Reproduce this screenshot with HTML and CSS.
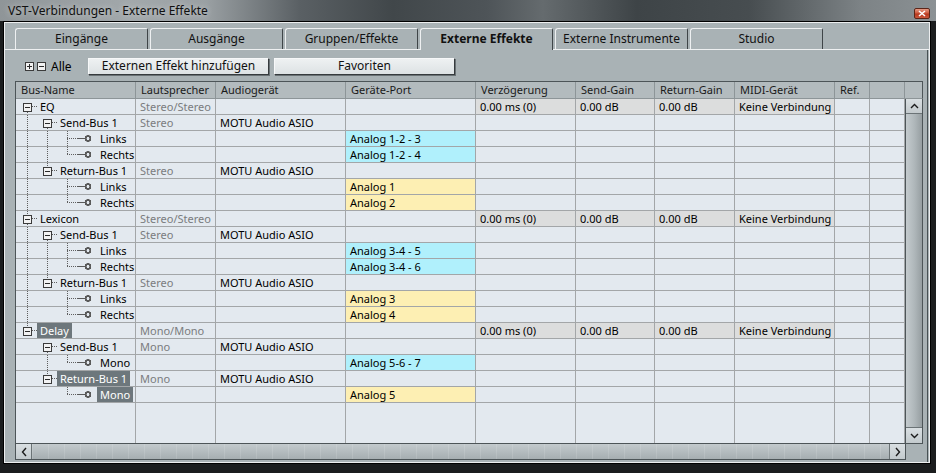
FILE: index.html
```html
<!DOCTYPE html>
<html lang="de">
<head>
    <meta charset="UTF-8">
    <meta name="viewport" content="width=device-width, initial-scale=1.0">
    <title>VST-Verbindungen - Externe Effekte</title>
    <link rel="stylesheet" href="styles.css">
</head>
<body>
<div class="window">
    <div class="titlebar">
        <span class="title">VST-Verbindungen - Externe Effekte</span>
        <span class="close"><svg width="8" height="7" viewBox="0 0 8 7"><path d="M1 1 L7 6 M7 1 L1 6" stroke="#fff" stroke-width="1.6"/></svg></span>
    </div>
    <div class="client">
        <div class="inner">
            <div class="tabs">
                <div class="tab">Eingänge</div>
                <div class="tab">Ausgänge</div>
                <div class="tab">Gruppen/Effekte</div>
                <div class="tab active">Externe Effekte</div>
                <div class="tab">Externe Instrumente</div>
                <div class="tab">Studio</div>
            </div>
            <div class="panel">
                <div class="toolbar">
                    <div class="expand">
                        <span class="bx plus"></span>
                        <span class="bx"></span>
                        <span class="alle">Alle</span>
                    </div>
                    <button class="btn">Externen Effekt hinzufügen</button>
                    <button class="btn">Favoriten</button>
                </div>

                <div class="tbl">
                    <div class="head">
                        <div class="hc">Bus-Name</div>
                        <div class="hc">Lautsprecher</div>
                        <div class="hc">Audiogerät</div>
                        <div class="hc">Geräte-Port</div>
                        <div class="hc">Verzögerung</div>
                        <div class="hc">Send-Gain</div>
                        <div class="hc">Return-Gain</div>
                        <div class="hc">MIDI-Gerät</div>
                        <div class="hc">Ref.</div>
                        <div class="hc"></div>
                        <div class="hc last"></div>
                    </div>
                    <div class="body">
                        <div class="rows">
                            <!-- EQ -->
                            <div class="row">
                                <div class="c tree"><span class="u n dn"><i class="bx"></i></span><span class="lbl">EQ</span></div>
                                <div class="c g">Stereo/Stereo</div><div class="c"></div><div class="c"></div>
                                <div class="c hl">0.00 ms (0)</div><div class="c hl">0.00 dB</div><div class="c hl">0.00 dB</div><div class="c hl">Keine Verbindung</div><div class="c"></div><div class="c"></div>
                            </div>
                            <div class="row">
                                <div class="c tree"><span class="u v"></span><span class="u n dn"><i class="bx"></i></span><span class="lbl">Send-Bus 1</span></div>
                                <div class="c g">Stereo</div><div class="c">MOTU Audio ASIO</div><div class="c"></div>
                                <div class="c"></div><div class="c"></div><div class="c"></div><div class="c"></div><div class="c"></div><div class="c"></div>
                            </div>
                            <div class="row">
                                <div class="c tree"><span class="u v"></span><span class="u v"></span><span class="u t"></span><span class="pin"></span><span class="lbl">Links</span></div>
                                <div class="c"></div><div class="c"></div><div class="c cy">Analog 1-2 - 3</div>
                                <div class="c"></div><div class="c"></div><div class="c"></div><div class="c"></div><div class="c"></div><div class="c"></div>
                            </div>
                            <div class="row">
                                <div class="c tree"><span class="u v"></span><span class="u v"></span><span class="u l"></span><span class="pin"></span><span class="lbl">Rechts</span></div>
                                <div class="c"></div><div class="c"></div><div class="c cy">Analog 1-2 - 4</div>
                                <div class="c"></div><div class="c"></div><div class="c"></div><div class="c"></div><div class="c"></div><div class="c"></div>
                            </div>
                            <div class="row">
                                <div class="c tree"><span class="u v"></span><span class="u n up"><i class="bx"></i></span><span class="lbl">Return-Bus 1</span></div>
                                <div class="c g">Stereo</div><div class="c">MOTU Audio ASIO</div><div class="c"></div>
                                <div class="c"></div><div class="c"></div><div class="c"></div><div class="c"></div><div class="c"></div><div class="c"></div>
                            </div>
                            <div class="row">
                                <div class="c tree"><span class="u v"></span><span class="u"></span><span class="u t"></span><span class="pin"></span><span class="lbl">Links</span></div>
                                <div class="c"></div><div class="c"></div><div class="c ye">Analog 1</div>
                                <div class="c"></div><div class="c"></div><div class="c"></div><div class="c"></div><div class="c"></div><div class="c"></div>
                            </div>
                            <div class="row">
                                <div class="c tree"><span class="u v"></span><span class="u"></span><span class="u l"></span><span class="pin"></span><span class="lbl">Rechts</span></div>
                                <div class="c"></div><div class="c"></div><div class="c ye">Analog 2</div>
                                <div class="c"></div><div class="c"></div><div class="c"></div><div class="c"></div><div class="c"></div><div class="c"></div>
                            </div>
                            <!-- Lexicon -->
                            <div class="row">
                                <div class="c tree"><span class="u n up dn"><i class="bx"></i></span><span class="lbl">Lexicon</span></div>
                                <div class="c g">Stereo/Stereo</div><div class="c"></div><div class="c"></div>
                                <div class="c hl">0.00 ms (0)</div><div class="c hl">0.00 dB</div><div class="c hl">0.00 dB</div><div class="c hl">Keine Verbindung</div><div class="c"></div><div class="c"></div>
                            </div>
                            <div class="row">
                                <div class="c tree"><span class="u v"></span><span class="u n dn"><i class="bx"></i></span><span class="lbl">Send-Bus 1</span></div>
                                <div class="c g">Stereo</div><div class="c">MOTU Audio ASIO</div><div class="c"></div>
                                <div class="c"></div><div class="c"></div><div class="c"></div><div class="c"></div><div class="c"></div><div class="c"></div>
                            </div>
                            <div class="row">
                                <div class="c tree"><span class="u v"></span><span class="u v"></span><span class="u t"></span><span class="pin"></span><span class="lbl">Links</span></div>
                                <div class="c"></div><div class="c"></div><div class="c cy">Analog 3-4 - 5</div>
                                <div class="c"></div><div class="c"></div><div class="c"></div><div class="c"></div><div class="c"></div><div class="c"></div>
                            </div>
                            <div class="row">
                                <div class="c tree"><span class="u v"></span><span class="u v"></span><span class="u l"></span><span class="pin"></span><span class="lbl">Rechts</span></div>
                                <div class="c"></div><div class="c"></div><div class="c cy">Analog 3-4 - 6</div>
                                <div class="c"></div><div class="c"></div><div class="c"></div><div class="c"></div><div class="c"></div><div class="c"></div>
                            </div>
                            <div class="row">
                                <div class="c tree"><span class="u v"></span><span class="u n up"><i class="bx"></i></span><span class="lbl">Return-Bus 1</span></div>
                                <div class="c g">Stereo</div><div class="c">MOTU Audio ASIO</div><div class="c"></div>
                                <div class="c"></div><div class="c"></div><div class="c"></div><div class="c"></div><div class="c"></div><div class="c"></div>
                            </div>
                            <div class="row">
                                <div class="c tree"><span class="u v"></span><span class="u"></span><span class="u t"></span><span class="pin"></span><span class="lbl">Links</span></div>
                                <div class="c"></div><div class="c"></div><div class="c ye">Analog 3</div>
                                <div class="c"></div><div class="c"></div><div class="c"></div><div class="c"></div><div class="c"></div><div class="c"></div>
                            </div>
                            <div class="row">
                                <div class="c tree"><span class="u v"></span><span class="u"></span><span class="u l"></span><span class="pin"></span><span class="lbl">Rechts</span></div>
                                <div class="c"></div><div class="c"></div><div class="c ye">Analog 4</div>
                                <div class="c"></div><div class="c"></div><div class="c"></div><div class="c"></div><div class="c"></div><div class="c"></div>
                            </div>
                            <!-- Delay -->
                            <div class="row">
                                <div class="c tree"><span class="u n up"><i class="bx"></i></span><span class="lbl sel">Delay</span></div>
                                <div class="c g">Mono/Mono</div><div class="c"></div><div class="c"></div>
                                <div class="c hl">0.00 ms (0)</div><div class="c hl">0.00 dB</div><div class="c hl">0.00 dB</div><div class="c hl">Keine Verbindung</div><div class="c"></div><div class="c"></div>
                            </div>
                            <div class="row">
                                <div class="c tree"><span class="u"></span><span class="u n dn"><i class="bx"></i></span><span class="lbl">Send-Bus 1</span></div>
                                <div class="c g">Mono</div><div class="c">MOTU Audio ASIO</div><div class="c"></div>
                                <div class="c"></div><div class="c"></div><div class="c"></div><div class="c"></div><div class="c"></div><div class="c"></div>
                            </div>
                            <div class="row">
                                <div class="c tree"><span class="u"></span><span class="u v"></span><span class="u l"></span><span class="pin"></span><span class="lbl">Mono</span></div>
                                <div class="c"></div><div class="c"></div><div class="c cy">Analog 5-6 - 7</div>
                                <div class="c"></div><div class="c"></div><div class="c"></div><div class="c"></div><div class="c"></div><div class="c"></div>
                            </div>
                            <div class="row">
                                <div class="c tree"><span class="u"></span><span class="u n up"><i class="bx"></i></span><span class="lbl sel">Return-Bus 1</span></div>
                                <div class="c g">Mono</div><div class="c">MOTU Audio ASIO</div><div class="c"></div>
                                <div class="c"></div><div class="c"></div><div class="c"></div><div class="c"></div><div class="c"></div><div class="c"></div>
                            </div>
                            <div class="row">
                                <div class="c tree"><span class="u"></span><span class="u"></span><span class="u l"></span><span class="pin"></span><span class="lbl sel">Mono</span></div>
                                <div class="c"></div><div class="c"></div><div class="c ye">Analog 5</div>
                                <div class="c"></div><div class="c"></div><div class="c"></div><div class="c"></div><div class="c"></div><div class="c"></div>
                            </div>
                            <div class="row filler">
                                <div class="c"></div><div class="c"></div><div class="c"></div><div class="c"></div><div class="c"></div>
                                <div class="c"></div><div class="c"></div><div class="c"></div><div class="c"></div><div class="c"></div>
                            </div>
                        </div>
                        <div class="vscroll">
                            <div class="sbtn top"><svg width="9" height="6" viewBox="0 0 9 6"><path d="M1 5 L4.5 1.5 L8 5" fill="none" stroke="#1c1c1c" stroke-width="1.4"/></svg></div>
                            <div class="track"></div>
                            <div class="sbtn bottom"><svg width="9" height="6" viewBox="0 0 9 6"><path d="M1 1 L4.5 4.5 L8 1" fill="none" stroke="#1c1c1c" stroke-width="1.4"/></svg></div>
                        </div>
                    </div>
                    <div class="foot">
                        <div class="hbar">
                            <div class="sbtn left"><svg width="6" height="10" viewBox="0 0 6 10"><path d="M5 1 L1.5 5 L5 9" fill="none" stroke="#1c1c1c" stroke-width="1.4"/></svg></div>
                            <div class="htrack"></div>
                            <div class="sbtn right"><svg width="6" height="10" viewBox="0 0 6 10"><path d="M1 1 L4.5 5 L1 9" fill="none" stroke="#1c1c1c" stroke-width="1.4"/></svg></div>
                        </div>
                        <div class="corner"></div>
                    </div>
                </div>
            </div>
        </div>
    </div>
</div>
</body>
</html>
```

FILE: styles.css
```css
* {
    box-sizing: border-box;
}
body {
    margin: 0;
    background: #1b1d1e;
    font-family: "Noto Sans", "Liberation Sans", sans-serif;
    font-size: 11px;
    color: #000;
    --dv: repeating-linear-gradient(to bottom, #5e5e5e 0 1px, transparent 1px 2px);
    --dh: repeating-linear-gradient(to right, #5e5e5e 0 1px, transparent 1px 2px);
    --grid: #a3a6a8;
    --edge: #4d5558;
}
.window {
    width: 936px;
    height: 473px;
    overflow: hidden;
}

/* title bar */
.titlebar {
    height: 21px;
    display: flex;
    justify-content: space-between;
    padding: 0 6px 0 8px;
    background: linear-gradient(to right, #8f9598 0%, #a2a8ab 14%, #9aa0a3 22%, #5a6064 32%, #41474a 42%, #4e5458 52%, #656b6e 58%, #3e4447 68%, #474d50 80%, #7d8386 92%, #8b9194 100%);
}
.title {
    line-height: 21px;
    font-size: 12px;
    color: #101010;
    text-shadow: 0 0 6px rgba(255, 255, 255, 0.6);
}
.close {
    align-self: flex-end;
    margin-bottom: 2px;
    width: 16px;
    height: 11px;
    display: flex;
    align-items: center;
    justify-content: center;
    border: 1px solid #5c2518;
    border-radius: 2px;
    background: linear-gradient(#e59a84, #cf5a3e 45%, #b6391f 55%, #c9553a);
}

/* window frame */
.client {
    margin-left: 3px;
    width: 928px;
    height: 443px;
    border: 1px solid #000;
}
.inner {
    height: 100%;
    border: 1px solid #eceeef;
    background: #a9b2b5;
}

/* tabs */
.tabs {
    display: flex;
    align-items: flex-end;
    gap: 2px;
    height: 27px;
    padding-left: 10px;
    border-bottom: 1px solid #eef0f1;
}
.tab {
    width: 133px;
    height: 21px;
    line-height: 19px;
    text-align: center;
    font-size: 12px;
    color: #111;
    border-top: 1px solid #eef0f1;
    border-left: 1px solid #eef0f1;
    border-right: 1px solid #3f4548;
    border-radius: 3px 2px 0 0;
    background: #a9b2b5;
}
.tab.active {
    height: 22px;
    margin-bottom: -1px;
    font-weight: bold;
}

/* panel */
.panel {
    height: 412px;
    margin-right: 1px;
    padding: 7px 0 0 10px;
    border-right: 1px solid #475053;
}
.toolbar {
    display: flex;
    align-items: center;
    height: 18px;
    padding-left: 10px;
    margin-bottom: 6px;
}
.expand {
    width: 63px;
    display: flex;
    align-items: center;
    gap: 3px;
}
.alle {
    margin-left: 2px;
    font-size: 12px;
}
.btn {
    width: 181px;
    height: 17px;
    margin-right: 5px;
    padding: 0;
    font-family: inherit;
    font-size: 12px;
    line-height: 14px;
    color: #111;
    background: linear-gradient(#eef1f2, #dde2e4);
    border: 1px solid;
    border-color: #f7f8f9 #363b3e #363b3e #f7f8f9;
    box-shadow: 1px 1px 0 #6a7275;
}

/* tree boxes */
.bx {
    display: block;
    width: 9px;
    height: 9px;
    border: 1px solid #3b3b3b;
    background: #f2f2f2 linear-gradient(#2a2a2a, #2a2a2a) center / 5px 1px no-repeat;
}
.bx.plus {
    background:
        linear-gradient(#2a2a2a, #2a2a2a) center / 5px 1px no-repeat,
        linear-gradient(#2a2a2a, #2a2a2a) center / 1px 5px no-repeat,
        #f2f2f2;
}

/* table */
.tbl {
    width: 908px;
    border-left: 1px solid var(--edge);
    border-top: 1px solid var(--edge);
}
.head,
.row {
    display: grid;
    grid-template-columns: 120px 80px 130px 130px 100px 79px 80px 100px 35px 35px;
}
.head {
    grid-template-columns: 120px 80px 130px 130px 100px 79px 80px 100px 35px 35px 18px;
    height: 17px;
    background: #b3bbbe;
}
.hc {
    padding-left: 5px;
    line-height: 16px;
    color: #1a1a1a;
    border-right: 1px solid #8d9598;
    border-bottom: 1px solid #8d9598;
    white-space: nowrap;
}
.hc.last {
    border-right-color: var(--edge);
}
.body {
    display: flex;
    height: 344px;
}
.rows {
    width: 889px;
    display: flex;
    flex-direction: column;
    background: #e3e9ef;
}
.row {
    height: 16px;
}
.c {
    padding-left: 4px;
    line-height: 15px;
    white-space: nowrap;
    overflow: hidden;
    border-right: 1px solid var(--grid);
    border-bottom: 1px solid var(--grid);
}
.row.filler {
    flex: 1;
}
.row.filler .c {
    border-bottom: none;
}
.g { color: #7a7c7e; }
.hl { background: #dcdddd; }
.cy { background: #b0f0fc; }
.ye { background: #fdefb3; }

.tree {
    display: flex;
    padding-left: 1px;
}
.u {
    flex: none;
    width: 20px;
    height: 15px;
    background-repeat: no-repeat;
}
.u.v {
    background-image: var(--dv);
    background-size: 1px 15px;
    background-position: 10px 0;
}
.u.t {
    background-image: var(--dv), var(--dh);
    background-size: 1px 15px, 10px 1px;
    background-position: 10px 0, 10px 7px;
}
.u.l {
    background-image: var(--dv), var(--dh);
    background-size: 1px 8px, 10px 1px;
    background-position: 10px 0, 10px 7px;
}
.u.n {
    display: flex;
    align-items: center;
    padding-left: 6px;
    background-image: var(--dh);
    background-size: 5px 1px;
    background-position: 15px 7px;
}
.u.n.up {
    background-image: var(--dh), var(--dv);
    background-size: 5px 1px, 1px 4px;
    background-position: 15px 7px, 10px 0;
}
.u.n.dn {
    background-image: var(--dh), var(--dv);
    background-size: 5px 1px, 1px 5px;
    background-position: 15px 7px, 10px 11px;
}
.u.n.up.dn {
    background-image: var(--dh), var(--dv), var(--dv);
    background-size: 5px 1px, 1px 4px, 1px 5px;
    background-position: 15px 7px, 10px 0, 10px 11px;
}
.u.n .bx {
    margin-top: 1px;
}
.pin {
    flex: none;
    width: 15px;
    height: 15px;
    margin-right: 5px;
    background:
        radial-gradient(circle at 11px 7.5px, #e3e9ef 0 1.3px, #5a5a5a 1.6px 3.2px, transparent 3.5px),
        linear-gradient(#5a5a5a, #5a5a5a) 0 7px / 9px 1px no-repeat;
}
.lbl {
    padding: 0 3px;
    line-height: 15px;
}
.lbl.sel {
    background: #6d777c;
    color: #fff;
}

/* scrollbars */
.vscroll {
    width: 18px;
    display: flex;
    flex-direction: column;
    border-left: 1px solid var(--edge);
    border-right: 1px solid var(--edge);
    background: linear-gradient(to right, #c4cbce, #aeb6b9 55%, #969ea1);
}
.sbtn {
    display: flex;
    align-items: center;
    justify-content: center;
    background: linear-gradient(#d9dfe2, #c3cacd);
}
.sbtn.top {
    height: 15px;
    border-bottom: 1px solid #6b7376;
}
.sbtn.bottom {
    height: 16px;
    border-top: 1px solid #6b7376;
}
.track {
    flex: 1;
}
.foot {
    display: flex;
    height: 17px;
}
.hbar {
    width: 890px;
    display: flex;
    border-top: 1px solid var(--edge);
    border-bottom: 1px solid var(--edge);
    border-right: 1px solid var(--edge);
    background:
        repeating-linear-gradient(to right, rgba(255, 255, 255, 0.12) 0 1px, transparent 1px 16px),
        linear-gradient(#c3cacd, #a6aeb1);
}
.sbtn.left {
    width: 16px;
    border-right: 1px solid #6b7376;
}
.sbtn.right {
    width: 16px;
    border-left: 1px solid #6b7376;
}
.htrack {
    flex: 1;
}
.corner {
    width: 17px;
    border-top: 1px solid var(--edge);
}
```
